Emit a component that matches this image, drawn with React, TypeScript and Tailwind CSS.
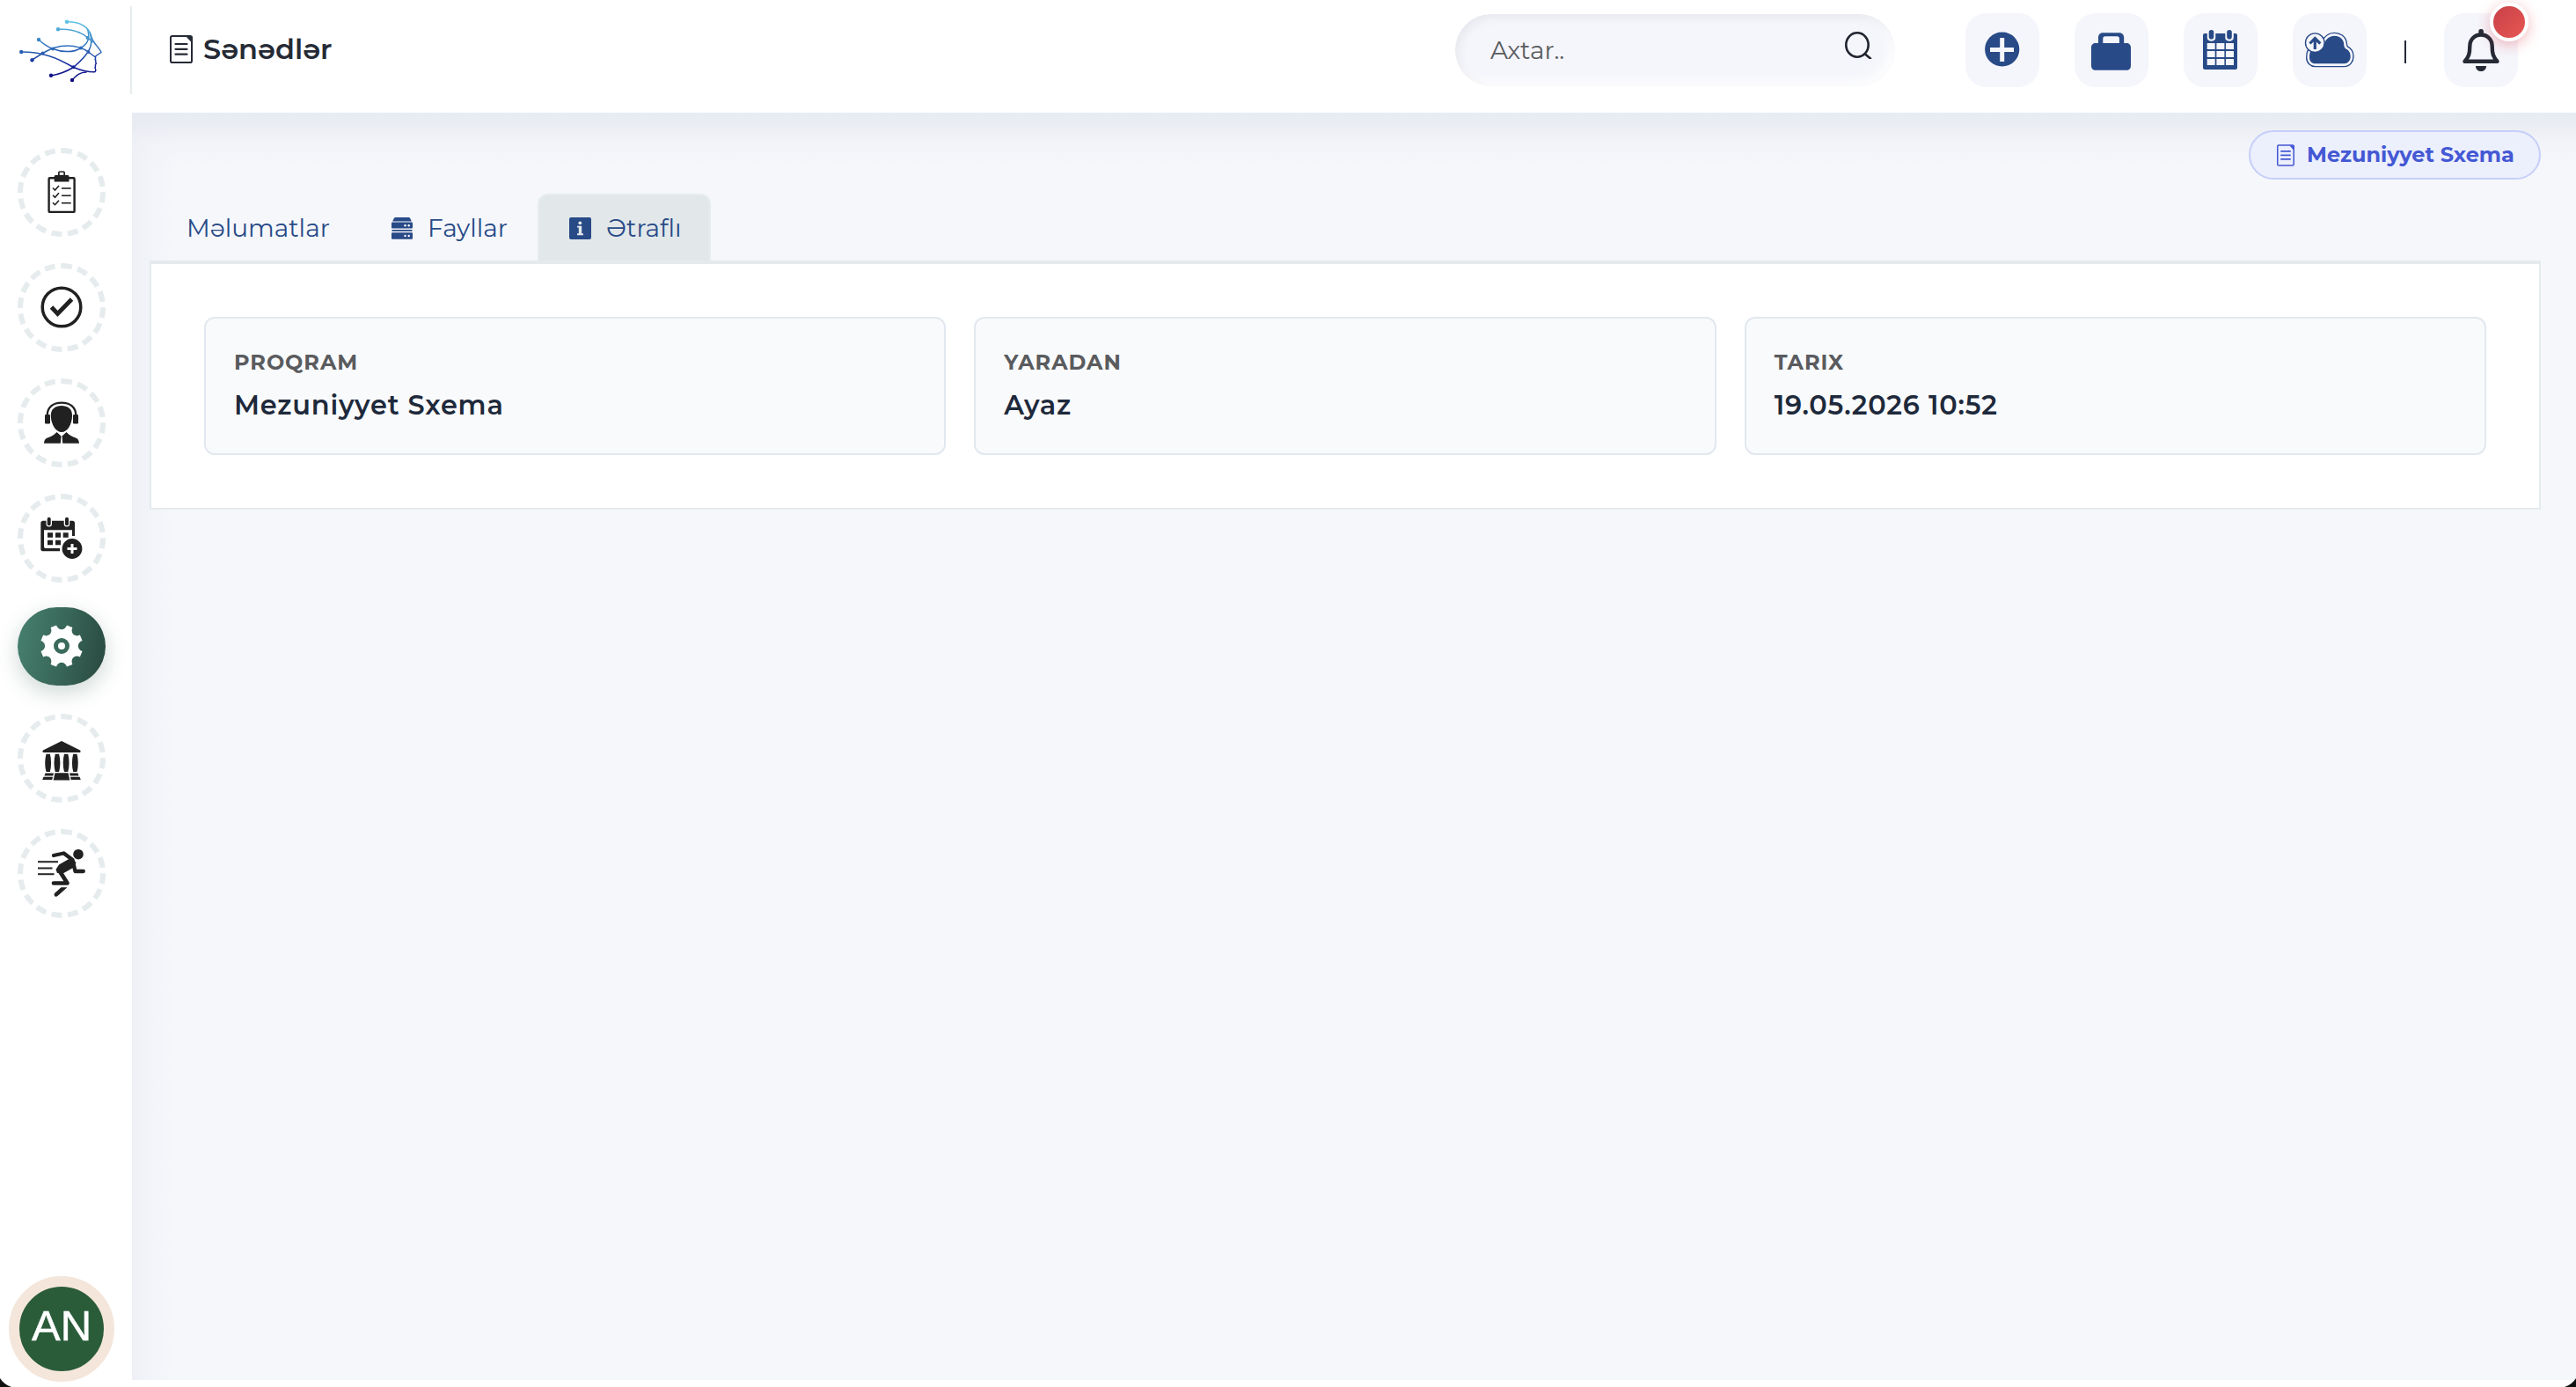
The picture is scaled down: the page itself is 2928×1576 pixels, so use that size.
import React from "react";

const NAVY = "#284a87";
const INK = "#212121";

// One tooth-to-tooth segment of the cog repeated around the centre (50, 44)
const gearPath = () => {
  const point = (deg: number, r: number) => {
    const a = (deg * Math.PI) / 180;
    return `${(50 + r * Math.sin(a)).toFixed(2)} ${(44 - r * Math.cos(a)).toFixed(2)}`;
  };
  let d = `M${point(-14.3, 24.3)}`;
  for (let k = 0; k < 8; k++) {
    const base = k * 45;
    d += `C${point(base - 12, 17.6)} ${point(base + 12, 17.6)} ${point(base + 14.3, 24.3)}`;
    d += `L${point(base + 30.7, 24.3)}`;
  }
  return d + "Z";
};

const Logo: React.FC = () => (
  <svg className="h-[78px] w-[104px]" viewBox="18 19 104 78" fill="none">
    <defs>
      <linearGradient id="logo" gradientUnits="userSpaceOnUse" x1="0" y1="22" x2="0" y2="94">
        <stop offset="0" stopColor="#62cdea" />
        <stop offset="0.3" stopColor="#3f8fcb" />
        <stop offset="0.55" stopColor="#2659b0" />
        <stop offset="0.75" stopColor="#16249a" />
        <stop offset="1" stopColor="#0b0578" />
      </linearGradient>
    </defs>
    <g stroke="url(#logo)" strokeWidth="1.5" strokeLinecap="round" strokeLinejoin="round">
      <path d="M76 25.7C91 25.7 101 31 104 43C105.5 50 113 55 115 60.5L109 64.5C107.5 66 109.5 67 108 68.5C110.5 70 107 71 109.5 73C107 74.5 109.5 76 108 78C109 80 109 82 107.5 82.8C99 83 91 80.5 83.5 77.5" />
      <path d="M66 34C81 34 92 37 99 43.5C101 45 103 46 105 49" />
      <path d="M99.5 34C103 46 99 51 92 55.5C83 61.5 69 60 60 56.5C54 54 48 50 44 46" />
      <path d="M102 38C107 52 102 62 83.5 77.5C76 82 67 85.5 58 87" />
      <path d="M36 69.3L48.5 61.5C58 56 65 53 77 53C89 53 95 56 101 60.5L108.5 66" />
      <path d="M24 60C48 60 64 66 83.5 77.5" />
      <path d="M82 92C87 86.5 91 83 98 83" />
    </g>
    <g fill="url(#logo)">
      <circle cx="76" cy="25.7" r="2.2" />
      <circle cx="66" cy="34.2" r="2.2" />
      <circle cx="44" cy="46" r="2.2" />
      <circle cx="24.2" cy="60" r="2.2" />
      <circle cx="36.5" cy="69.3" r="2.2" />
      <circle cx="58" cy="86.8" r="2.2" />
      <circle cx="82" cy="92" r="2.2" />
      <circle cx="60" cy="56.5" r="1.9" />
      <circle cx="48.5" cy="61.5" r="1.9" />
      <circle cx="92" cy="55.5" r="1.9" />
      <circle cx="100.5" cy="60" r="1.9" />
      <circle cx="83.5" cy="77.3" r="2" />
      <circle cx="99.5" cy="44" r="1.9" />
    </g>
  </svg>
);

const DocIcon: React.FC<{ className: string; thin?: boolean }> = ({ className, thin }) => (
  <svg className={className} viewBox="0 0 26 32" fill="none" stroke="currentColor">
    <rect x="1" y="1" width="24" height="30" rx="1.8" strokeWidth="2" />
    <path d="M18.5 1.5H25V8.5Z" fill="currentColor" stroke="none" />
    <path d="M6.5 10H19.5M6.5 15.8H19.5M6.5 21.7H19.5" strokeWidth={thin ? 2.4 : 2.2} strokeLinecap="round" />
  </svg>
);

const SearchIcon: React.FC = () => (
  <svg className="h-[31px] w-[31px]" viewBox="0 0 31 31" fill="none" stroke="#20242f" strokeWidth="2.6">
    <ellipse cx="14" cy="15" rx="12.7" ry="13.7" />
    <path d="M23 25.5L29 30.5" strokeLinecap="round" />
  </svg>
);

const PlusIcon = (
  <>
    <circle cx="41.7" cy="41" r="19.6" fill={NAVY} />
    <path d="M39.2 28H44.2V39H55V44H44.2V55H39.2V44H28V39H39.2Z" fill="#f5f6fb" />
  </>
);

const BagIcon = (
  <path
    fill={NAVY}
    fillRule="evenodd"
    d="M24 34H27V27.5C27 24.5 29 22.2 32 22.2H51C54 22.2 56.2 24.5 56.2 27.5V34H59C62 34 64 36 64 39V59.7C64 62.7 62 64.7 59 64.7H24C21 64.7 19 62.7 19 59.7V39C19 36 21 34 24 34ZM32.3 34H51V29C51 27.3 50 26.3 48.5 26.3H34.8C33.3 26.3 32.3 27.3 32.3 29Z"
  />
);

const CalendarIcon = (
  <>
    <rect x="22" y="23" width="39" height="41" rx="2" fill={NAVY} />
    <g fill="#f5f6fb">
      <path d="M26.8 22H36.3V28C36.3 33 26.8 33 26.8 28ZM47.3 22H56.8V28C56.8 33 47.3 33 47.3 28Z" />
      {[34, 43, 52].map((y) =>
        [26.7, 37.4, 48].map((x) => <rect key={`${x}-${y}`} x={x} y={y} width="9" height="7" rx="0.5" />)
      )}
    </g>
    <rect x="28.7" y="19" width="5.6" height="10.5" rx="2.8" fill={NAVY} />
    <rect x="49.2" y="19" width="5.6" height="10.5" rx="2.8" fill={NAVY} />
  </>
);

const CLOUD =
  "M25.5 57.3H58.5C63 57.3 65.7 53.5 65.7 49C65.7 44.5 63.5 42 60.5 40.5C58 38.5 58.5 37 58 33.5C57 28.5 52.5 25.7 47.5 25.7C41.5 25.7 38 29.5 36 34C33 41 27 44.5 20 44C19.2 45.5 19 47.5 19 50.5C19 54.5 22 57.3 25.5 57.3Z";

const CloudIcon = (
  <>
    <path d={CLOUD} fill={NAVY} stroke={NAVY} strokeWidth="8" strokeLinejoin="round" />
    <path d={CLOUD} fill={NAVY} stroke="#f5f6fb" strokeWidth="5.2" strokeLinejoin="round" />
    <path d={CLOUD} fill={NAVY} />
    <circle cx="25.3" cy="33.7" r="10.8" fill="#f5f6fb" stroke={NAVY} strokeWidth="1.4" />
    <path d="M25.3 41V29.5M19.5 34.5L25.3 28.5L31.3 34.5" fill="none" stroke={NAVY} strokeWidth="3.2" />
  </>
);

const BellIcon = (
  <>
    <path
      d="M42 24.5C34.5 24.5 29.3 30 29.3 37.5C29.3 46 28 50 23.5 54.8H60.5C56 50 54.7 46 54.7 37.5C54.7 30 49.5 24.5 42 24.5Z"
      fill="none"
      stroke="#252a35"
      strokeWidth="4.4"
      strokeLinejoin="round"
    />
    <rect x="39.3" y="18" width="5.6" height="7" rx="2.5" fill="#252a35" />
    <path d="M36 60H48C48 68 36 68 36 60Z" fill="#252a35" />
  </>
);

const ClipboardIcon = (
  <>
    <rect x="35.6" y="34.2" width="29" height="38.7" rx="1" fill="none" stroke={INK} strokeWidth="2.4" />
    <path d="M41.7 38.5V32.5C41.7 31.5 42.5 31 43.5 31H46V28.5C46 27.2 46.8 26.6 48 26.6H52C53.2 26.6 54 27.2 54 28.5V31H56.5C57.7 31 58.5 31.5 58.5 32.5V38.5Z" fill={INK} />
    <rect x="47.7" y="28" width="4.6" height="2.8" fill="#fff" />
    {[46, 54.3, 62.7].map((y) => (
      <g key={y} fill="none" stroke={INK} strokeWidth="1.6">
        <path d={`M40 ${y - 0.5}L42.5 ${y + 2}L47 ${y - 3}`} />
        <path d={`M50 ${y}H60.7`} />
      </g>
    ))}
  </>
);

const CheckIcon = (
  <g fill="none" stroke={INK}>
    <circle cx="50" cy="50" r="21.8" strokeWidth="3.5" />
    <path d="M38.5 50L45.5 57.5L61.5 41" strokeWidth="4.8" />
  </g>
);

const SupportIcon = (
  <g fill={INK}>
    <path d="M50 31C57 31 62 34.5 62 42C62 53 56 61 50 61C44 61 37.8 53 37.8 42C37.8 34.5 43 31 50 31Z" />
    <path d="M33.7 43C33.5 32 41 27.6 50 27.6C59 27.6 66.5 32 66.3 43" fill="none" stroke={INK} strokeWidth="2.3" />
    <rect x="31" y="41" width="6" height="10.5" rx="1.2" />
    <rect x="63" y="41" width="6" height="10.5" rx="1.2" />
    <path d="M30 73.7C30.5 69 32 68 36 66.7C40 65.3 42 63.5 44.5 61L49.5 65.5L48.8 73.7ZM70 73.7C69.5 69 68 68 64 66.7C60 65.3 58 63.5 55.5 61L50.5 65.5L51.2 73.7Z" />
  </g>
);

const CalendarPlusIcon = (
  <>
    <path d="M29 30.7H62.5C64 30.7 65 31.7 65 33V48H62V41.3H30V59.5C30 61.5 31 62 32 62H48V65.3H29C27.4 65.3 26.3 64.5 26.3 63V33C26.3 31.7 27.4 30.7 29 30.7Z" fill={INK} />
    <rect x="32.5" y="25.5" width="6.5" height="12" rx="3.2" fill="#fff" />
    <rect x="52.7" y="25.5" width="6.5" height="12" rx="3.2" fill="#fff" />
    <g fill={INK}>
      <rect x="33.7" y="26.7" width="4" height="9.5" rx="2" />
      <rect x="54" y="26.7" width="4" height="9.5" rx="2" />
      <path d="M34 44.3H40V49.7H34ZM43 44.3H49V49.7H43ZM51.7 44.3H57.7V49.7H51.7ZM34 52.7H40V58.3H34ZM43 52.7H49V58.3H43Z" />
      <circle cx="62" cy="62.5" r="12.6" fill="#fff" />
      <circle cx="62" cy="62.5" r="11.4" />
    </g>
    <path d="M62 57V68M56.5 62.5H67.5" stroke="#fff" strokeWidth="3" />
  </>
);

const BankIcon = (
  <g fill={INK}>
    <path d="M50 31L71 41.5C72 42.5 71.7 44 70.5 44H29.5C28.3 44 28 42.5 29 41.5Z" />
    {[31.5, 41.8, 52, 62.2].map((x) => (
      <path
        key={x}
        d={`M${x + 1} 45.7H${x + 5.3}C${x + 7} 52 ${x + 7} 60 ${x + 5.3} 66H${x + 1}C${x - 0.7} 60 ${x - 0.7} 52 ${x + 1} 45.7Z`}
      />
    ))}
    <path d="M42.5 67.2H57.5L59.3 75.5H40.7Z" />
    <path d="M31.5 67.4H41L40.3 70.4H30.5ZM29.5 71.7H40L39.3 75H28.2ZM68.5 67.4H59L59.7 70.4H69.5ZM70.5 71.7H60L60.7 75H71.8Z" />
  </g>
);

const RunnerIcon = (
  <>
    <circle cx="69" cy="28.7" r="5.8" fill={INK} />
    <path d="M23 37.3H46M23 44.4H39.5M23 51.3H41.5" fill="none" stroke={INK} strokeWidth="2" />
    <path d="M61 32.5L66.5 38L64 43.5L52.5 50L45 50L43.5 46L47 40.5L57.5 34.5Z" fill={INK} />
    <g fill="none" stroke={INK} strokeWidth="4.3" strokeLinecap="round" strokeLinejoin="round">
      <path d="M41 30L52.5 27.5L62.5 35L65.5 48H74.8" />
      <path d="M47 46.5L56.5 61.5H41" strokeWidth="4.7" />
    </g>
    <path d="M49.5 66.2H56.5L45.5 76C43.5 78 40.5 75.5 42 73Z" fill={INK} />
  </>
);

const sideItems = [ClipboardIcon, CheckIcon, SupportIcon, CalendarPlusIcon, null, BankIcon, RunnerIcon];

const headerActions = [PlusIcon, BagIcon, CalendarIcon, CloudIcon];

const details = [
  { label: "PROQRAM", value: "Mezuniyyet Sxema" },
  { label: "YARADAN", value: "Ayaz" },
  { label: "TARIX", value: "19.05.2026 10:52" },
];

const Header: React.FC = () => (
  <header className="flex h-[128px] shrink-0 items-center bg-white pr-[66px] pb-[14px]">
    <div className="flex h-[100px] w-[150px] shrink-0 items-center border-r-2 border-[#e6ecee] pl-[18px]">
      <Logo />
    </div>
    <h1 className="flex items-center gap-[12px] pb-[2px] pl-[43px] text-[32px] font-semibold text-[#252a35]">
      <DocIcon className="h-[32px] w-[26px]" />
      Sənədlər
    </h1>
    <div className="ml-auto flex items-center">
      <label className="flex h-[82px] w-[500px] items-center justify-between rounded-[41px] bg-[#f5f6fb] pr-[26px] pl-[40px] shadow-[inset_4px_4px_12px_rgba(0,0,0,0.06),inset_-6px_-6px_12px_rgba(255,255,255,0.85)]">
        <span className="text-[28px] text-[#5a5c60]">Axtar..</span>
        <span className="pb-[11px]">
          <SearchIcon />
        </span>
      </label>
      <nav className="ml-[80px] flex items-center gap-[40px]">
        {headerActions.map((icon, i) => (
          <button key={i} className="size-[84px] rounded-[24px] bg-[#f5f6fb]">
            <svg className="size-[84px]" viewBox="0 0 84 84">{icon}</svg>
          </button>
        ))}
      </nav>
      <div className="mt-[4px] ml-[43px] h-[26px] w-[2px] bg-[#252a35]" />
      <button className="relative ml-[43px] size-[84px] rounded-[24px] bg-[#f5f6fb]">
        <svg className="size-[84px]" viewBox="0 0 84 84">{BellIcon}</svg>
        <span className="absolute -top-[12px] left-[52px] size-[44px] rounded-full border-4 border-white bg-linear-to-br from-[#c53d46] to-[#ea5a55] bg-origin-border shadow-[0_4px_16px_rgba(220,53,69,0.35)]" />
      </button>
    </div>
  </header>
);

const Sidebar: React.FC = () => (
  <aside className="flex w-[150px] shrink-0 flex-col items-center justify-between bg-white pt-[40px] pr-[10px]">
    <div className="flex flex-col gap-[30px]">
      {sideItems.map((icon, i) =>
        icon ? (
          <button
            key={i}
            className="flex h-[101px] w-[100px] items-center justify-center rounded-full border-[6px] border-dashed border-[#e6ecee]"
          >
            <svg className="-mt-[1px] size-[60px] shrink-0" viewBox="20 20 60 60">{icon}</svg>
          </button>
        ) : (
          <button
            key={i}
            className="-mt-[2px] mb-[2px] h-[89px] w-[100px] rounded-[45px] bg-[linear-gradient(100deg,#478170_0%,#376456_55%,#29483f_100%)] shadow-[0_8px_24px_rgba(45,90,77,0.24)]"
          >
            <svg className="h-[89px] w-[100px]" viewBox="0 0 100 89">
              <path d={gearPath()} fill="#fff" />
              <circle cx="50" cy="44" r="6.5" fill="none" stroke="#3a6a5c" strokeWidth="5" />
            </svg>
          </button>
        )
      )}
    </div>
    <div className="mb-[6px] flex size-[120px] items-center justify-center rounded-full border-[12px] border-[#f4e6db] bg-[#2b5c3a] pb-[8px] font-['Liberation_Sans',sans-serif] text-[49px] leading-none text-white [-webkit-text-stroke:0.5px_white]">
      AN
    </div>
  </aside>
);

const ServerIcon: React.FC = () => (
  <svg className="h-[25px] w-[24px]" viewBox="0 0 24 25" fill={NAVY}>
    <path d="M4.5 0H19.5C20.8 0 22 2 22.7 4.5H1.3C2 2 3.2 0 4.5 0Z" />
    <rect x="0" y="5.6" width="24" height="7" rx="1" />
    <rect x="0.5" y="14" width="23" height="1.8" />
    <rect x="0" y="17.3" width="24" height="7.5" rx="1" />
    <g fill="#fff">
      <circle cx="15.5" cy="9.2" r="1.2" />
      <circle cx="19.7" cy="9.2" r="1.2" />
      <circle cx="15.5" cy="21" r="1.2" />
      <circle cx="19.7" cy="21" r="1.2" />
    </g>
  </svg>
);

const InfoIcon: React.FC = () => (
  <svg className="size-[25px]" viewBox="0 0 25 25">
    <rect width="25" height="25" rx="2" fill={NAVY} />
    <circle cx="12.3" cy="6.3" r="1.9" fill="#e2e8ea" />
    <path d="M9 9.7H14.2V18.3H16V20.3H9V18.3H10.8V11.6H9Z" fill="#e2e8ea" />
  </svg>
);

const Tabs: React.FC = () => (
  <div className="flex h-[76px] pl-[8px] text-[28px] font-normal text-[#284a87]">
    <div className="flex w-[231px] items-center pt-[2px] pl-[34px]">Məlumatlar</div>
    <div className="flex w-[202px] items-center gap-[17px] pt-[2px] pl-[36px]">
      <ServerIcon />
      Fayllar
    </div>
    <div className="flex w-[197px] items-center gap-[17px] rounded-t-[12px] border-2 border-b-0 border-[#e6ecee] bg-[#e2e8ea] pl-[34px]">
      <InfoIcon />
      Ətraflı
    </div>
  </div>
);

export default function App() {
  return (
    <div className="relative flex h-[1576px] w-full flex-col overflow-hidden bg-white font-[Montserrat,Inter,sans-serif]">
      <Header />
      <div className="flex min-h-0 flex-1">
        <Sidebar />
        <main className="mb-[8px] flex min-w-0 flex-1 flex-col bg-[#f5f7fb] bg-[linear-gradient(to_bottom,#e7ebf5_0px,rgba(233,235,242,0.9)_12px,rgba(240,241,246,0.5)_36px,rgba(245,247,251,0)_64px),linear-gradient(to_right,#eff0f5_0px,#f2f4f9_20px,rgba(245,247,251,0)_50px)] pt-[20px] pr-[40px] pl-[20px]">
          <div className="flex h-[56px] w-[332px] items-center self-end rounded-full border-2 border-[#c5cff8] bg-[#eceffc] pl-[30px] text-[#4458d4]">
            <DocIcon className="h-[25px] w-[20px]" thin />
            <span className="ml-[14px] text-[24px] font-bold whitespace-nowrap">Mezuniyyet Sxema</span>
          </div>
          <div className="mt-[16px]">
            <Tabs />
            <section className="grid grid-cols-3 gap-[32px] border-2 border-t-4 border-[#e5ebed] bg-white p-[60px]">
              {details.map((item) => (
                <div
                  key={item.label}
                  className="h-[157px] rounded-[12px] border-2 border-[#e2e8ef] bg-[#f9fafc] px-[32px] pt-[32px]"
                >
                  <p className="text-[24px] leading-[36px] font-bold tracking-[0.96px] text-[#5a5b5e]">{item.label}</p>
                  <p className="mt-[9px] text-[30.4px] leading-[44px] font-semibold tracking-[0.8px] text-[#1e293b]">{item.value}</p>
                </div>
              ))}
            </section>
          </div>
        </main>
      </div>
      {/* rounded window corners */}
      <svg className="absolute bottom-0 left-0 h-[10px] w-[13px]" viewBox="0 0 13 10">
        <path d="M0 0C3 4.5 7 8 13 10H0Z" fill="#111" />
      </svg>
      <svg className="absolute right-0 bottom-0 h-[10px] w-[13px]" viewBox="0 0 13 10">
        <path d="M13 0C10 4.5 6 8 0 10H13Z" fill="#111" />
      </svg>
    </div>
  );
}
